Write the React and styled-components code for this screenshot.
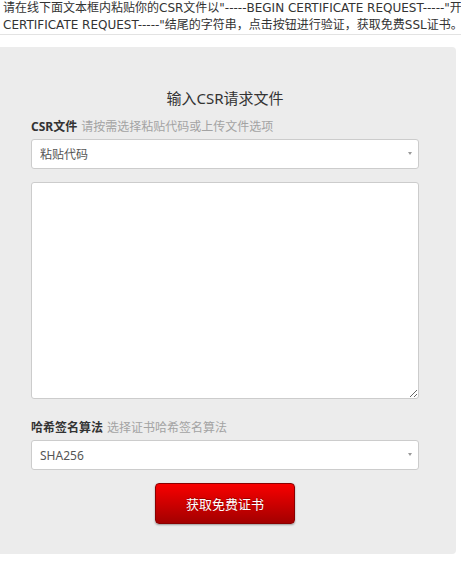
import React from 'react'
import styled, { createGlobalStyle } from 'styled-components'

//---------- styles ----------

const GlobalStyle = createGlobalStyle`
  body {
    margin: 0;
    background: #fff;
    overflow: hidden;
    font-family: "Noto Sans", "Noto Sans CJK SC", sans-serif;
    color: #333;
  }
`

//texte d'introduction en haut de page
const Intro = styled.p`
  margin: 0;
  padding: 0 0 0 3px;
  font-family: "DejaVu Sans", "Noto Sans CJK SC", sans-serif;
  font-size: 12px;
  line-height: 17px;
  white-space: nowrap;
  color: #333;
  border-bottom: 1px solid #e3e3e3;
`

//bloc gris du formulaire
const Panel = styled.section`
  margin-top: 12px;
  width: 456px;
  box-sizing: border-box;
  padding: 41px 37px 30px 31px;
  background: #ececec;
  border-radius: 0 4px 4px 0;
`

const Title = styled.h3`
  margin: 0;
  font-size: 15px;
  font-weight: normal;
  line-height: 20px;
  text-align: center;
  color: #333;
`

const Label = styled.div`
  margin-top: ${({ $top }) => $top}px;
  font-size: 12px;
  line-height: 16px;
  strong {
    color: #333;
  }
  span {
    color: #a3a3a3;
    margin-left: 4px;
  }
`

const SelectWrap = styled.div`
  position: relative;
  margin-top: 4px;
`

const Select = styled.select`
  display: block;
  width: 100%;
  height: 30px;
  box-sizing: border-box;
  padding: 0 20px 0 8px;
  font-family: inherit;
  font-size: 12px;
  color: #555;
  background: #fff;
  border: 1px solid #ccc;
  border-radius: 3px;
  appearance: none;
  outline: none;
`

//petite flèche du select
const Caret = styled.span`
  position: absolute;
  right: 7px;
  top: 13px;
  width: 0;
  height: 0;
  border-left: 2px solid transparent;
  border-right: 2px solid transparent;
  border-top: 3px solid #999;
  pointer-events: none;
`

const Code = styled.textarea`
  display: block;
  margin-top: 13px;
  width: 100%;
  height: 217px;
  box-sizing: border-box;
  border: 1px solid #ccc;
  border-radius: 3px;
  background: #fff;
  resize: vertical;
  outline: none;
`

const Actions = styled.div`
  display: flex;
  justify-content: center;
  margin-top: 13px;
`

const Submit = styled.button`
  width: 140px;
  height: 41px;
  font-family: inherit;
  font-size: 13px;
  color: #fff;
  text-shadow: 0 -1px 0 rgba(0, 0, 0, 0.3);
  background: linear-gradient(to bottom, #f80000, #a30000);
  border: 1px solid #8a0000;
  border-radius: 4px;
  box-shadow: 0 1px 2px rgba(0, 0, 0, 0.35);
  cursor: pointer;
`

//---------- composant principal ----------

export default function App() {
  return (
    <>
      <GlobalStyle />
      <Intro>
        请在线下面文本框内粘贴你的CSR文件以"-----BEGIN CERTIFICATE REQUEST-----"开头，"-----END
        <br />
        CERTIFICATE REQUEST-----"结尾的字符串，点击按钮进行验证，获取免费SSL证书。
      </Intro>
      <Panel>
        <Title>输入CSR请求文件</Title>
        <Label $top={11}>
          <strong>CSR文件</strong>
          <span>请按需选择粘贴代码或上传文件选项</span>
        </Label>
        <SelectWrap>
          <Select defaultValue="paste">
            <option value="paste">粘贴代码</option>
            <option value="upload">上传文件</option>
          </Select>
          <Caret />
        </SelectWrap>
        <Code />
        <Label $top={21}>
          <strong>哈希签名算法</strong>
          <span>选择证书哈希签名算法</span>
        </Label>
        <SelectWrap>
          <Select defaultValue="sha256">
            <option value="sha256">SHA256</option>
            <option value="sha1">SHA1</option>
          </Select>
          <Caret />
        </SelectWrap>
        <Actions>
          <Submit type="button">获取免费证书</Submit>
        </Actions>
      </Panel>
    </>
  )
}
